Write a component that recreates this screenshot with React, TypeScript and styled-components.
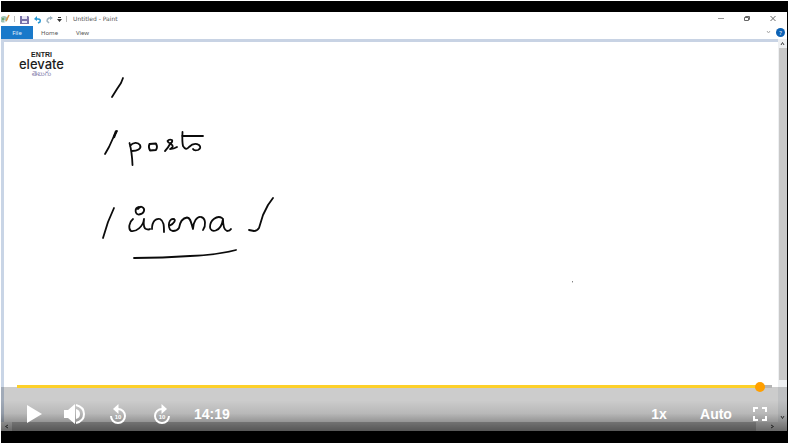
import React, { useState } from "react";
import styled, { createGlobalStyle } from "styled-components";

const GlobalStyle = createGlobalStyle`
  * { box-sizing: border-box; }
  body { margin: 0; background: #fff; }
  button, input { font: inherit; margin: 0; padding: 0; border: 0; background: none; color: inherit; }
  button { cursor: pointer; }
  svg { display: block; }
`;

const Page = styled.main`
  min-height: 100vh;
  padding: 1px 2px 0 1px;
  display: flex;
`;

const Player = styled.section`
  position: relative;
  flex: 1;
  display: flex;
  flex-direction: column;
  padding: 11px 1px 12px 0;
  background: #000;
`;

const PaintWindow = styled.div`
  flex: 1;
  display: flex;
  flex-direction: column;
  background: #fff;
  color: #555;
  font: 6px/8px "Noto Sans", "Open Sans", sans-serif;
`;

const TitleBar = styled.header`
  display: flex;
  align-items: center;
  height: 14px;
  padding-right: 10px;
`;

const QuickTools = styled.div`
  display: flex;
  align-items: center;
  gap: 4px;
`;

const ToolIcon = styled.svg`
  flex: none;
`;

const Separator = styled.span`
  width: 1px;
  height: 6px;
  background: #bbb;
`;

const Title = styled.span`
  flex: 1;
  margin-left: 6px;
  font-family: "DejaVu Sans", sans-serif;
`;

const WindowButtons = styled.div`
  display: flex;
  gap: 18px;
`;

const Tabs = styled.nav`
  display: flex;
  align-items: center;
  height: 13px;
  padding-right: 2px;
`;

const Tab = styled.button<{ $active?: boolean }>`
  height: 13px;
  min-width: ${(p) => (p.$active ? "32px" : "33px")};
  background: ${(p) => (p.$active ? "#1979ca" : "transparent")};
  color: ${(p) => (p.$active ? "#e4f1fc" : "#555")};
`;

const TabSpace = styled.div`
  flex: 1;
`;

const HelpButton = styled.button`
  width: 9px;
  height: 9px;
  margin-left: 5px;
  border-radius: 50%;
  background: #0d62b5;
  color: #fff;
`;

const Workspace = styled.div`
  flex: 1;
  display: grid;
  grid-template-columns: 1fr 9px;
  grid-template-rows: 1fr 9px;
`;

const Canvas = styled.div`
  position: relative;
  background: #fff;
  border-top: 3px solid #c8d3e4;
  border-left: 3px solid #c9d5e6;
`;

const Ink = styled.svg`
  position: absolute;
  left: 0;
  top: 0;
`;

const Logo = styled.div`
  display: flex;
  flex-direction: column;
  align-items: center;
  width: 75px;
  padding-top: 9px;
  color: #1c1c1c;
  font-family: "Liberation Sans", Arial, sans-serif;
`;

const LogoTop = styled.b`
  font-size: 7px;
  line-height: 7px;
`;

const LogoName = styled.span`
  font: 500 13px/12px Inter, sans-serif;
`;

const LogoLanguage = styled.span`
  color: #8580ad;
  font: 7px/9px "Noto Sans Telugu", "Noto Sans", sans-serif;
`;

const VerticalBar = styled.div`
  display: flex;
  flex-direction: column;
  align-items: center;
  justify-content: space-between;
  padding: 2px 0;
  background: #eef0f2;
`;

const VerticalThumb = styled.div`
  flex: 1;
  width: 8px;
  margin: 2px 0 35px;
  background: #c8c8c8;
`;

const HorizontalBar = styled.div`
  grid-column: 1 / -1;
  display: flex;
  align-items: center;
  justify-content: space-between;
  padding: 0 12px 0 3px;
  background: #eee;
`;

const HorizontalThumb = styled.div`
  flex: 1;
  height: 9px;
  margin: 0 14px 0 3px;
  background: #c4c4c4;
`;

const Controls = styled.div`
  position: absolute;
  left: 0;
  right: 1px;
  bottom: 12px;
  height: 44px;
  display: flex;
  align-items: center;
  justify-content: space-between;
  padding: 10px 15px 0 17px;
  color: #fff;
  background: linear-gradient(rgba(0, 0, 0, 0.2) 30%, rgba(0, 0, 0, 0.28) 60%, rgba(0, 0, 0, 0.56));
  font: bold 14px/16px "Liberation Sans", Arial, sans-serif;
`;

const ControlGroup = styled.div<{ $gap: number }>`
  display: flex;
  align-items: center;
  gap: ${(p) => p.$gap}px;
`;

const Seek = styled.input`
  position: absolute;
  left: 16px;
  right: 15px;
  top: -6px;
  height: 10px;
  appearance: none;
  outline: none;
  &::-webkit-slider-runnable-track {
    height: 3px;
    background: linear-gradient(90deg, #fdd029 98%, #b5b5b5 98%);
  }
  &::-webkit-slider-thumb {
    appearance: none;
    width: 10px;
    height: 10px;
    margin-top: -3px;
    border-radius: 50%;
    background: #ff9f00;
  }
`;

const IconButton = styled.button`
  width: 24px;
  height: 24px;
`;

const TextButton = styled.button<{ $wide?: boolean }>`
  min-width: ${(p) => (p.$wide ? "50px" : "32px")};
  height: 24px;
`;

const Digits = styled.text`
  font: bold 6px "Liberation Sans", Arial, sans-serif;
`;

function Chevron({ d }: { d: string }) {
  return (
    <svg width="5" height="5" viewBox="0 0 5 5" fill="none" stroke="#444">
      <path d={d} />
    </svg>
  );
}

function SkipIcon({ forward }: { forward?: boolean }) {
  return (
    <svg width="24" height="24" viewBox="0 0 24 24" fill="none" stroke="#fff" strokeWidth="2">
      <g transform={forward ? "matrix(-1 0 0 1 24 0)" : undefined}>
        <path d="M5 14a7 7 0 1 0 7-7" />
        <path d="M12.500 2v10L7 7z" fill="#fff" stroke="none" />
      </g>
      <Digits x="12" y="17" textAnchor="middle" fill="#fff" stroke="none">10</Digits>
    </svg>
  );
}

function Drawing() {
  return (
    <Ink width="600" height="250" viewBox="4 42 600 250" fill="none" stroke="#0b0b0b" strokeWidth="1.800" strokeLinecap="round" strokeLinejoin="round">
      <path d="M123 78L121 83L117 89L112 97" />
      <path d="M117 131L114 136L109 147L105 154" />
      <path d="M116 131.500L114 137" strokeWidth="2.400" />
      <path d="M129.500 143Q132 152 132.500 165M130 146C133 142 138 142 140 145C142 149 137 151 132 151" />
      <path d="M149.500 144L156 143.500Q158 147 156 150L150 150.500Q148 147 149.500 144" />
      <path d="M165 151Q168 148 170 144Q173 142 172 140Q169 139 167.500 141Q168 143 171 144Q175 147 170 149Q174 149 177 147" />
      <path d="M182.500 132Q182 142 183 146Q186 151 189 147Q194 142 199 145Q202 148 198 150Q194 151 193 149M182 136H203" />
      <path d="M114 208L108 222L103 238" />
      <path d="M133 219C129 222 128 229 131 231C136 232 143 227 144 219Q143 228 146 229Q149 230 150 229" />
      <path d="M152 229C152 221 156 218 160 219C164 221 164 226 164 232" />
      <path d="M139 207C134 208 135 215 139 214.500C144 214 146 209 142 207Q140 206 138 209" />
      <path d="M169 226C174 224 177 219 173 219C168 219 167 230 173 231Q177 231 179 228C180 222 183 218 187 217.500C191 218 191 223 193 229C193 222 197 216 201 217C206 218 206 226 203 230" />
      <path d="M222 218C217 215 210 220 210 227C210 233 221 233 223 219C223 226 224 230 227 231Q230 231 231 229" />
      <path d="M273 198L268 205L263 215L259 228Q257 231 254 231L249 230" />
      <path d="M134 258Q163 258 190 256Q217 255 236 250" />
      <path d="M572.500 281.500V282" strokeWidth="1" stroke="#777" />
    </Ink>
  );
}

export default function App() {
  const [position, setPosition] = useState(99);
  return (
    <>
      <GlobalStyle />
      <Page>
        <Player aria-label="Video player">
          <PaintWindow>
            <TitleBar>
              <QuickTools>
                <ToolIcon width="9" height="10" viewBox="0 0 9 10">
                  <path d="M0 3Q5 0 7 5Q5 10 0 8z" fill="#9fc2b5" />
                  <circle cx="2" cy="5" r="1" fill="#5b9b50" />
                  <circle cx="4" cy="7" r="1" fill="#e9efee" />
                  <path d="M8 1L5 7" stroke="#d99445" strokeWidth="1.500" />
                </ToolIcon>
                <Separator />
                <ToolIcon width="10" height="9" viewBox="0 0 10 9">
                  <path d="M1 1h8l1 1v7H1z" fill="#7972a8" />
                  <path d="M3 1h5v3H3zM3 6h5v2H3z" fill="#e8e6f4" />
                </ToolIcon>
                <ToolIcon width="9" height="9" viewBox="0 0 9 9" fill="none" stroke="#2496d3" strokeWidth="1.500">
                  <path d="M3 4h2Q8 4 7 7L5 8" />
                  <path d="M1 4L4 1v5z" fill="#2496d3" stroke="none" />
                </ToolIcon>
                <ToolIcon width="7" height="9" viewBox="0 0 7 9" fill="none" stroke="#9db2bf" strokeWidth="1.500">
                  <path d="M5 3H3Q1 4 1 6l2 2" />
                  <path d="M7 3L4 1v4z" fill="#9db2bf" stroke="none" />
                </ToolIcon>
                <ToolIcon width="5" height="5" viewBox="0 0 5 5">
                  <path d="M1 0h3v1H1zM0 2h5L2.500 5z" fill="#333" />
                </ToolIcon>
                <Separator />
              </QuickTools>
              <Title>Untitled - Paint</Title>
              <WindowButtons>
                <button aria-label="Minimize">
                  <svg width="8" height="8" viewBox="0 0 8 8"><path d="M1 3.500h6" stroke="#999" /></svg>
                </button>
                <button aria-label="Restore">
                  <svg width="8" height="8" viewBox="0 0 8 8" fill="none" stroke="#666"><path d="M1.500 2.500h4v3h-4zM2.500 2.500V1.500h4V4.500H5.500" /></svg>
                </button>
                <button aria-label="Close">
                  <svg width="8" height="8" viewBox="0 0 8 8" stroke="#666"><path d="M1.500 1l5 5M6.500 1l-5 5" /></svg>
                </button>
              </WindowButtons>
            </TitleBar>
            <Tabs>
              <Tab $active>File</Tab>
              <Tab>Home</Tab>
              <Tab>View</Tab>
              <TabSpace />
              <svg width="5" height="5" viewBox="0 0 5 5" fill="none" stroke="#aaa"><path d="M1 1l1.500 2L4 1" /></svg>
              <HelpButton aria-label="Help">?</HelpButton>
            </Tabs>
            <Workspace>
              <Canvas>
                <Logo>
                  <LogoTop>ENTRI</LogoTop>
                  <LogoName>elevate</LogoName>
                  <LogoLanguage lang="te">తెలుగు</LogoLanguage>
                </Logo>
                <Drawing />
              </Canvas>
              <VerticalBar>
                <Chevron d="M1 4L2.500 1.500L4 4" />
                <VerticalThumb />
                <Chevron d="M1 1L2.500 3.500L4 1" />
              </VerticalBar>
              <HorizontalBar>
                <Chevron d="M4 1L1.500 2.500L4 4" />
                <HorizontalThumb />
                <Chevron d="M1 1L3.500 2.500L1 4" />
              </HorizontalBar>
            </Workspace>
          </PaintWindow>
          <Controls>
            <Seek type="range" aria-label="Seek" min={0} max={100} value={position} onChange={(e) => setPosition(Number(e.target.value))} />
            <ControlGroup $gap={20}>
              <IconButton aria-label="Play">
                <svg width="24" height="24" viewBox="0 0 24 24"><path d="M9 3l15 9-15 9z" fill="#fff" /></svg>
              </IconButton>
              <IconButton aria-label="Mute">
                <svg width="24" height="24" viewBox="0 0 24 24" fill="none" stroke="#fff" strokeWidth="2">
                  <path d="M2 8h4l7-6v20l-7-6H2z" fill="#fff" stroke="none" />
                  <path d="M14 7q4 1 4 5t-4 5z" fill="#fff" stroke="none" />
                  <path d="M14 3q8 2 8 9t-8 9" />
                </svg>
              </IconButton>
              <IconButton aria-label="Back 10 seconds"><SkipIcon /></IconButton>
              <IconButton aria-label="Forward 10 seconds"><SkipIcon forward /></IconButton>
              <time>14:19</time>
            </ControlGroup>
            <ControlGroup $gap={16}>
              <TextButton $wide aria-label="Playback speed">1x</TextButton>
              <TextButton aria-label="Quality">Auto</TextButton>
              <IconButton aria-label="Full screen">
                <svg width="24" height="24" viewBox="0 0 24 24" fill="none" stroke="#fff" strokeWidth="2">
                  <path d="M6 10V6h4M14 6h4v4M18 14v4h-4M10 18H6v-4" />
                </svg>
              </IconButton>
            </ControlGroup>
          </Controls>
        </Player>
      </Page>
    </>
  );
}
